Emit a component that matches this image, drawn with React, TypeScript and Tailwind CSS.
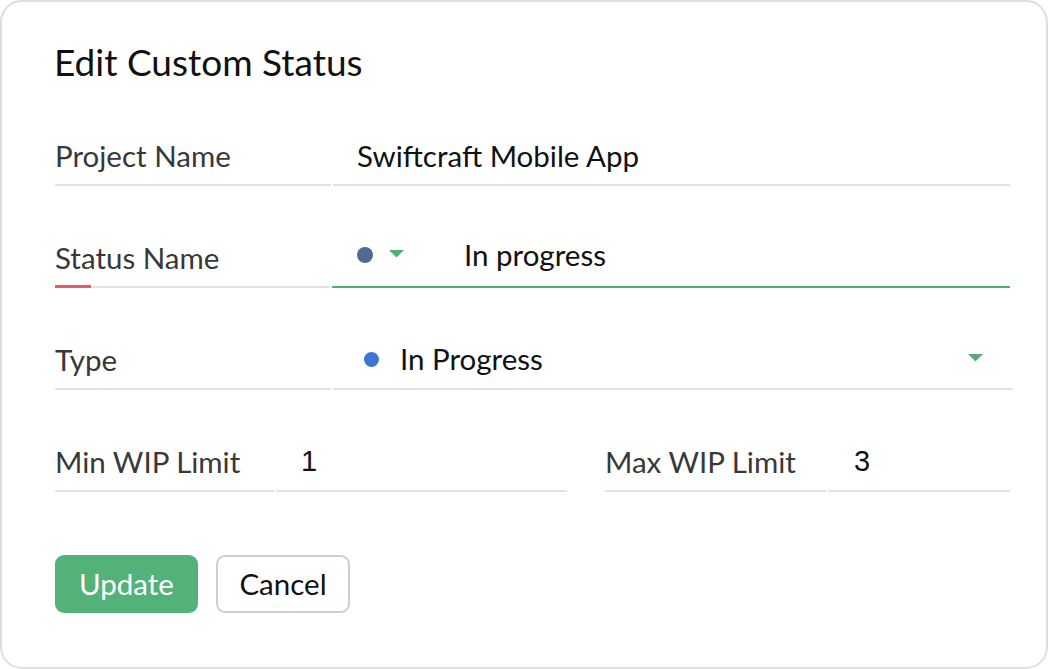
import React from "react";

function Caret({ className = "" }: { className?: string }) {
  return (
    <svg width="15" height="8" viewBox="0 0 15 8" className={className}>
      <polygon points="0,0 15,0 7.5,7.5" fill="#4fb074" />
    </svg>
  );
}

export default function App() {
  return (
    <div className="w-[1048px] h-[669px] bg-white font-['Lato',sans-serif]">
      <div className="box-border w-[1048px] h-[669px] border-2 border-[#dedede] rounded-[22px] bg-white pl-[53px] pt-[38px]">
        <h1 className="text-[37px] leading-[44px] text-[#111] font-normal -ml-[1px]">Edit Custom Status</h1>

        {/* Project Name */}
        <div className="flex h-[102px]">
          <div className="w-[276px] border-b-2 border-[#e2e2e2] flex items-end pb-[10px]">
            <span className="text-[29.5px] leading-[36px] text-[#383838]">Project Name</span>
          </div>
          <div className="ml-[2px] w-[677px] border-b-2 border-[#e2e2e2] flex items-end pb-[10px] pl-[24px]">
            <span className="text-[29.5px] leading-[36px] text-[#111]">Swiftcraft Mobile App</span>
          </div>
        </div>

        {/* Status Name */}
        <div className="flex h-[102px]">
          <div className="relative w-[276px] border-b-2 border-[#e2e2e2] flex items-end pb-[10px]">
            <span className="text-[29.5px] leading-[36px] text-[#383838]">Status Name</span>
            <div className="absolute left-0 bottom-[-2px] w-[36px] h-[3px] bg-[#ea5b5f]" />
          </div>
          <div className="ml-[1px] w-[678px] border-b-2 border-[#4fb074] flex items-end pb-[13px] pl-[25px]">
            <div className="flex items-center h-[36px]">
              <span className="w-[16px] h-[16px] rounded-full bg-[#4f6b93]" />
              <Caret className="ml-[16px] -mt-[2px]" />
              <span className="ml-[60px] text-[29.5px] leading-[36px] text-[#111]">In progress</span>
            </div>
          </div>
        </div>

        {/* Type */}
        <div className="flex h-[102px]">
          <div className="w-[276px] border-b-2 border-[#e2e2e2] flex items-end pb-[10px]">
            <span className="text-[29.5px] leading-[36px] text-[#383838]">Type</span>
          </div>
          <div className="ml-[2px] w-[680px] border-b-2 border-[#e2e2e2] flex items-end pb-[11px] pl-[31px] pr-[30px]">
            <div className="flex items-center h-[36px] w-full">
              <span className="w-[15px] h-[15px] rounded-full bg-[#3b77d2]" />
              <span className="ml-[21px] text-[29.5px] leading-[36px] text-[#111]">In Progress</span>
              <Caret className="ml-auto -mt-[2px]" />
            </div>
          </div>
        </div>

        {/* WIP */}
        <div className="flex h-[102px]">
          <div className="w-[219px] border-b-2 border-[#e2e2e2] flex items-end pb-[10px]">
            <span className="text-[29.5px] leading-[36px] text-[#383838]">Min WIP Limit</span>
          </div>
          <div className="ml-[2px] w-[291px] border-b-2 border-[#e2e2e2] flex items-end pb-[11px] pl-[25px]">
            <span className="text-[29px] leading-[36px] text-[#111] font-['Liberation_Sans',Arial,sans-serif]">1</span>
          </div>
          <div className="ml-[38px] w-[221px] border-b-2 border-[#e2e2e2] flex items-end pb-[10px]">
            <span className="text-[29.5px] leading-[36px] text-[#383838]">Max WIP Limit</span>
          </div>
          <div className="ml-[2px] w-[182px] border-b-2 border-[#e2e2e2] flex items-end pb-[11px] pl-[26px]">
            <span className="text-[29px] leading-[36px] text-[#111] font-['Liberation_Sans',Arial,sans-serif]">3</span>
          </div>
        </div>

        {/* Buttons */}
        <div className="flex mt-[63px] gap-[18px]">
          <button className="w-[143px] h-[58px] rounded-[9px] bg-[#52b27a] text-white text-[29.5px] leading-[36px]">Update</button>
          <button className="w-[134px] h-[58px] rounded-[9px] border-2 border-[#cfcfcf] bg-white text-[#111] text-[29.5px] leading-[36px]">Cancel</button>
        </div>
      </div>
    </div>
  );
}
